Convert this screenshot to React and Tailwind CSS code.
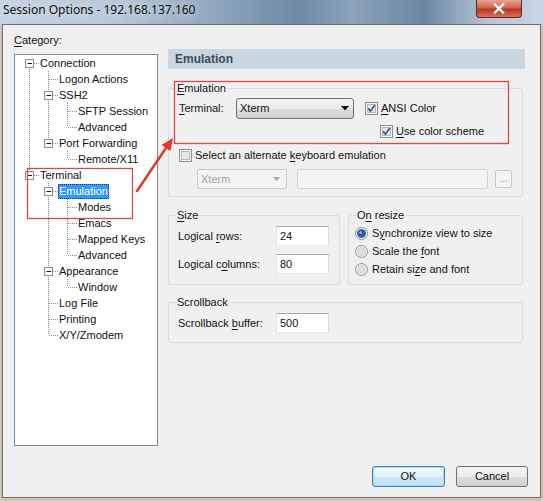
import React from "react"

const TREE = [
  { label: "Connection", children: [
    { label: "Logon Actions" },
    { label: "SSH2", children: [{ label: "SFTP Session" }, { label: "Advanced" }] },
    { label: "Port Forwarding", children: [{ label: "Remote/X11" }] },
  ] },
  { label: "Terminal", children: [
    { label: "Emulation", selected: true, children: [
      { label: "Modes" }, { label: "Emacs" }, { label: "Mapped Keys" }, { label: "Advanced" },
    ] },
    { label: "Appearance", children: [{ label: "Window" }] },
    { label: "Log File" },
    { label: "Printing" },
    { label: "X/Y/Zmodem" },
  ] },
]

function flatten(nodes, depth = 0, trail = [], out = []) {
  nodes.forEach((n, i) => {
    const last = i === nodes.length - 1
    out.push({ label: n.label, selected: n.selected, depth, trail, last, first: depth === 0 && i === 0, kids: !!n.children })
    if (n.children) flatten(n.children, depth + 1, [...trail, !last], out)
  })
  return out
}

const DOT = "#8c8c8c"

function TreeRow({ item }) {
  return (
    <div className="flex h-[16px] items-center pl-[5px]">
      {item.trail.map((cont, i) => (
        <svg key={i} width="19" height="16" className="shrink-0">
          {cont && <line x1="9.5" y1="0" x2="9.5" y2="16" stroke={DOT} strokeDasharray="1 1" />}
        </svg>
      ))}
      <svg width="19" height="16" className="shrink-0">
        <line x1="9.5" y1={item.first ? 8 : 0} x2="9.5" y2={item.last ? 8 : 16} stroke={DOT} strokeDasharray="1 1" />
        <line x1="10" y1="8.5" x2="19" y2="8.5" stroke={DOT} strokeDasharray="1 1" />
        {item.kids && (
          <g>
            <rect x="5.5" y="4.5" width="8" height="8" fill="#fff" stroke="#919191" />
            <line x1="7.5" y1="8.5" x2="12" y2="8.5" stroke="#1a1a1a" />
          </g>
        )}
      </svg>
      <span className={"h-[15px] leading-[15px] px-[1px] whitespace-nowrap " + (item.selected ? "bg-[#3399ff] text-white outline-1 outline-dotted outline-[#1a3a70] -outline-offset-1" : "")}>
        {item.label}
      </span>
    </div>
  )
}

function Check({ checked }) {
  return (
    <svg width="13" height="13" viewBox="0 0 13 13" className="shrink-0">
      <rect x="0.5" y="0.5" width="12" height="12" fill="#f6f6f6" stroke="#8e8f8f" />
      <rect x="2.5" y="2.5" width="8" height="8" fill="#e4e7eb" stroke="#b4b9bf" />
      {checked && <path d="M3.2 6.4 L5.4 9.2 L9.8 3.2" fill="none" stroke="#3d4f8a" strokeWidth="1.7" />}
    </svg>
  )
}

function Radio({ on }) {
  return (
    <svg width="13" height="13" viewBox="0 0 13 13" className="shrink-0">
      <circle cx="6.5" cy="6.5" r="6" fill="#f4f4f4" stroke="#8e8f8f" />
      <circle cx="6.5" cy="6.5" r="4" fill={on ? "#2e5ea8" : "#dcdfe3"} stroke={on ? "#20467f" : "#c3c7cc"} strokeWidth="0.8" />
      {on && <circle cx="5.6" cy="5.6" r="1.4" fill="#8fb4e6" />}
    </svg>
  )
}

function U({ children }) {
  return <span className="underline underline-offset-[2px]">{children}</span>
}

function TextBox({ value, className = "" }) {
  return (
    <div className={"h-[20px] bg-white border border-[#abadb3] border-x-[#dbdfe6] border-b-[#e3e9ef] pl-[3px] flex items-center " + className}>
      {value}
    </div>
  )
}

function Group({ label, className = "", children }) {
  return (
    <fieldset className={"border border-[#d5dfe5] rounded-[3px] " + className}>
      <legend className="ml-[7px] px-[1px] leading-[15px]">{label}</legend>
      {children}
    </fieldset>
  )
}

export default function App() {
  const rows = flatten(TREE)
  return (
    <div className="relative w-[543px] h-[501px] overflow-hidden bg-[#cfc4b7] text-[11px] text-[#111] font-['Liberation_Sans',sans-serif]">
      {/* title bar */}
      <div className="relative h-[24px] bg-[linear-gradient(90deg,#c5d3e1_0%,#b6c7d8_22%,#8ea5bd_40%,#6f89a5_55%,#8ba2ba_65%,#6c86a2_78%,#b4c5d6_90%,#c9d6e3_100%)]">
        <div className="pl-[3px] pt-[1px] text-[12px] leading-[18px] font-['Noto_Sans',sans-serif] text-[#0c0c0c] [text-shadow:0_0_8px_rgba(255,255,255,0.95)]">
          Session Options - 192.168.137.160
        </div>
        <div className="absolute left-[476px] top-0 w-[46px] h-[18px] rounded-b-[4px] border border-t-0 border-[#5a2a22] bg-[linear-gradient(180deg,#e8a593_0%,#d2644c_45%,#b9371f_55%,#d8705a_100%)] flex items-center justify-center">
          <svg width="12" height="11" viewBox="0 0 12 11">
            <path d="M2 1.5 L10 9.5 M10 1.5 L2 9.5" stroke="#fff" strokeWidth="2.4" strokeLinecap="square" />
          </svg>
        </div>
      </div>

      {/* client */}
      <div className="ml-[2px] w-[539px] h-[474px] border border-[#6d6d6d] bg-[#f0f0f0] flex flex-col">
        <div className="flex pl-[11px] pt-[8px]">
          {/* category tree */}
          <div className="w-[144px] shrink-0">
            <div className="leading-[15px]"><U>C</U>ategory:</div>
            <div className="mt-[6px] h-[392px] bg-white border border-[#828790] pt-0">
              {rows.map((r, i) => <TreeRow key={i} item={r} />)}
            </div>
          </div>

          {/* right panel */}
          <div className="ml-[10px] w-[357px] pt-[16px]">
            <div className="h-[20px] bg-[#c8d6e2] pl-[7px] flex items-center font-bold text-[12px] text-[#3b4c5c]">Emulation</div>

            <Group label={<><U>E</U>mulation</>} className="mt-[12px] w-[355px] pb-[7px]">
              <div className="pl-[10px]">
                <div className="mt-[2px] flex items-center h-[21px]">
                  <span className="w-[57px]"><U>T</U>erminal:</span>
                  <div className="w-[118px] h-[21px] rounded-[3px] border border-[#707070] bg-[linear-gradient(180deg,#f3f3f3_0%,#ebebeb_50%,#dddddd_51%,#d0d0d0_100%)] flex items-center justify-between pl-[3px] pr-[4px]">
                    <span>Xterm</span>
                    <svg width="8" height="5" viewBox="0 0 8 5"><path d="M0 0 L8 0 L4 4.5 Z" fill="#111" /></svg>
                  </div>
                  <div className="ml-[11px] flex items-center gap-[3px]"><Check checked /><span><U>A</U>NSI Color</span></div>
                </div>
                <div className="mt-[5px] ml-[201px] flex items-center gap-[3px] h-[15px]"><Check checked /><span><U>U</U>se color scheme</span></div>
                <div className="mt-[9px] flex items-center gap-[3px] h-[15px]"><Check /><span>Select an alternate <U>k</U>eyboard emulation</span></div>
                <div className="mt-[6px] ml-[18px] flex items-center h-[20px]">
                  <div className="w-[90px] h-[20px] rounded-[2px] border border-[#c6c9cd] bg-[#f4f4f4] flex items-center justify-between pl-[3px] pr-[6px] text-[#a3a3a3]">
                    <span>Xterm</span>
                    <svg width="7" height="4" viewBox="0 0 7 4"><path d="M0 0 L7 0 L3.5 4 Z" fill="#a8a8a8" /></svg>
                  </div>
                  <div className="ml-[10px] w-[191px] h-[20px] rounded-[2px] border border-[#d0d3d7] bg-[#f4f4f4]" />
                  <div className="ml-[7px] w-[17px] h-[18px] rounded-[2px] border border-[#c6c9cd] bg-[#f4f4f4] text-[#a0a0a0] text-[10px] leading-[12px] flex items-end justify-center pb-[2px]">...</div>
                </div>
              </div>
            </Group>

            <div className="mt-[11px] flex gap-[8px] w-[355px]">
              <Group label={<><U>S</U>ize</>} className="w-[172px] pb-[10px]">
                <div className="pl-[9px]">
                  <div className="mt-[3px] flex items-center h-[20px]">
                    <span className="w-[98px]">Logical <U>r</U>ows:</span>
                    <TextBox value="24" className="w-[53px]" />
                  </div>
                  <div className="mt-[8px] flex items-center h-[20px]">
                    <span className="w-[98px]">Logical c<U>o</U>lumns:</span>
                    <TextBox value="80" className="w-[53px]" />
                  </div>
                </div>
              </Group>
              <Group label={<>O<U>n</U> resize</>} className="w-[175px] pb-[6px]">
                <div className="pl-[6px] mt-[1px]">
                  <div className="flex items-center gap-[4px] h-[18px]"><Radio on /><span>S<U>y</U>nchronize view to size</span></div>
                  <div className="flex items-center gap-[4px] h-[18px]"><Radio /><span>Scale the <U>f</U>ont</span></div>
                  <div className="flex items-center gap-[4px] h-[18px]"><Radio /><span>Retain si<U>z</U>e and font</span></div>
                </div>
              </Group>
            </div>

            <Group label="Scrollback" className="mt-[10px] w-[355px] pb-[9px]">
              <div className="pl-[9px] mt-[3px] flex items-center h-[20px]">
                <span className="w-[98px]">Scrollback <U>b</U>uffer:</span>
                <TextBox value="500" className="w-[53px]" />
              </div>
            </Group>
          </div>
        </div>

        {/* buttons */}
        <div className="mt-[20px] flex justify-end gap-[11px] pr-[12px]">
          <div className="w-[73px] h-[21px] rounded-[3px] border border-[#3c7fb1] bg-[linear-gradient(180deg,#f2f9fd_0%,#e3f1fa_50%,#cfe7f6_51%,#c2e0f3_100%)] shadow-[inset_0_0_0_1px_#a8dbf7] flex items-center justify-center">OK</div>
          <div className="w-[72px] h-[21px] rounded-[3px] border border-[#707070] bg-[linear-gradient(180deg,#f3f3f3_0%,#ebebeb_50%,#dddddd_51%,#d0d0d0_100%)] flex items-center justify-center">Cancel</div>
        </div>
      </div>

      {/* red annotations drawn over the screenshot */}
      <svg className="absolute inset-0 pointer-events-none" width="543" height="501">
        <rect x="27.5" y="168.5" width="105" height="50" fill="none" stroke="#d24b4b" strokeWidth="1.3" />
        <rect x="174.5" y="81.5" width="334" height="62" fill="none" stroke="#d24b4b" strokeWidth="1.3" />
        <line x1="137" y1="191" x2="166" y2="148" stroke="#e0392b" strokeWidth="2.5" strokeLinecap="round" />
        <path d="M173 138 L170.5 151 L161.5 145 Z" fill="#e0392b" />
      </svg>
    </div>
  )
}
